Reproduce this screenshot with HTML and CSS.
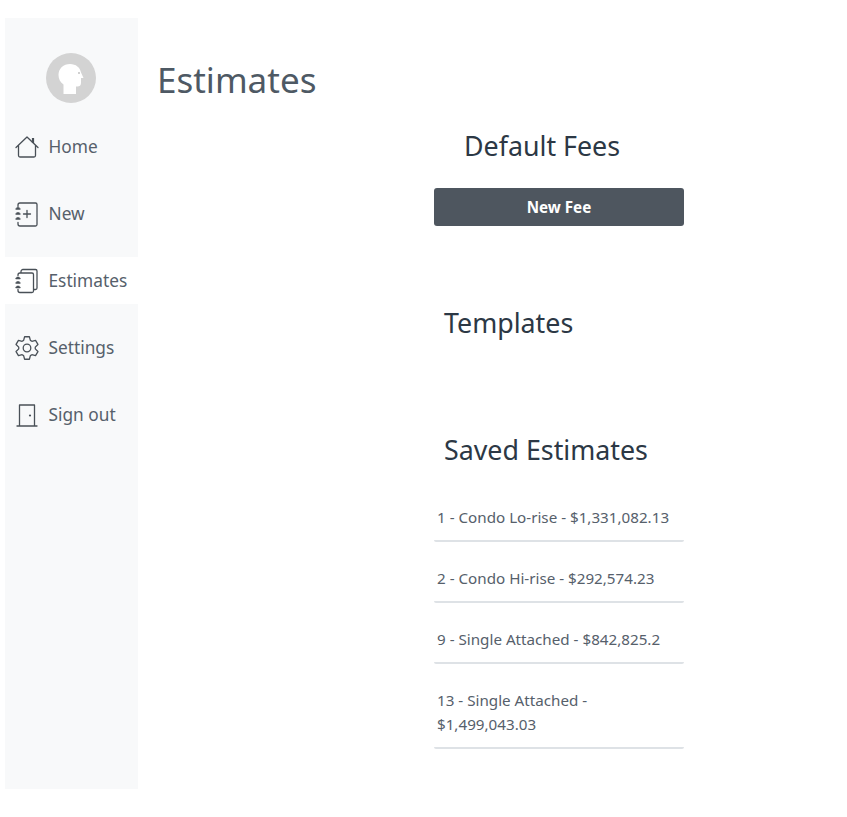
FILE: index.html
```html
<!DOCTYPE html>
<html lang="en">
<head>
<meta charset="utf-8">
<title>Estimates</title>
<link rel="stylesheet" href="styles.css">
</head>
<body>
<div class="app">
  <nav class="sidebar">
    <div class="avatar">
      <svg viewBox="0 0 50 50" width="50" height="50"><circle cx="25" cy="25" r="25" fill="#d3d3d3"/><path d="M17.500 41V31.500C14 29 12.500 25.500 12.500 22 12.500 15.500 17.500 11 24 11 30 11 34 14.500 35 19.500L37.500 25H35V30C35 32.500 33.500 33.500 31.500 33.500H30V41Z" fill="#fff"/><circle cx="33" cy="20" r=".9" fill="#bbb"/></svg>
    </div>
    <a class="item">
      <svg class="icon" viewBox="0 0 24 24"><path d="M1 12.500 12 2l11 10.500M3.500 10.500v10A1.500 1.500 0 0 0 5 22h14a1.500 1.500 0 0 0 1.500-1.500v-10"/><path class="chimney" d="M18 3v5"/></svg>
      <span>Home</span>
    </a>
    <a class="item">
      <svg class="icon" viewBox="0 0 24 24"><path d="M3 4.500V3a2 2 0 0 1 2-2h15.500A1.500 1.500 0 0 1 22 2.500v20a1.500 1.500 0 0 1-1.500 1.500H5a2 2 0 0 1-2-2v-1.500M1 7h4M2 5.800h2M1 12h4M2 10.800h2M1 17h4M2 15.800h2M12 8.500v7M8.500 12h7"/></svg>
      <span>New</span>
    </a>
    <a class="item active">
      <svg class="icon" viewBox="0 0 24 24"><path d="M3 6.500V6a2 2 0 0 1 2-2h12a1.500 1.500 0 0 1 1.500 1.500v16.500a1.500 1.500 0 0 1-1.500 1.500H5a2 2 0 0 1-2-2v-1M1 9.500h4M2 8.300h2M1 14h4M2 12.800h2M1 18.500h4M2 17.300h2M6 4V2.500a2 2 0 0 1 2-2h12.500A1.500 1.500 0 0 1 22 2v17a1.500 1.500 0 0 1-1.500 1.500h-2"/></svg>
      <span>Estimates</span>
    </a>
    <a class="item">
      <svg class="icon" viewBox="0 0 24 24"><path d="M8.620 4.420 9.610.75h4.780l.99 3.670 1.500.86 3.660-.97 2.400 4.140-2.680 2.680v1.740l2.680 2.680-2.400 4.140-3.660-.97-1.500.86-.99 3.670H9.610l-.99-3.670-1.500-.86-3.660.97-2.400-4.140 2.680-2.680v-1.740L1.060 8.450l2.400-4.140 3.660.97z"/><circle cx="12" cy="12" r="3.800"/></svg>
      <span>Settings</span>
    </a>
    <a class="item">
      <svg class="icon" viewBox="0 0 24 24"><path d="M2 23h20M4.500 23V2h15v21"/><circle class="knob" cx="15" cy="12.500" r="1.100"/></svg>
      <span>Sign out</span>
    </a>
  </nav>
  <main class="main">
    <h1 class="title">Estimates</h1>
    <div class="column">
      <h2 class="heading heading-fees">Default Fees</h2>
      <button class="button">New Fee</button>
      <h2 class="heading heading-templates">Templates</h2>
      <h2 class="heading heading-saved">Saved Estimates</h2>
      <ul class="list">
        <li>1 - Condo Lo-rise - $1,331,082.13</li>
        <li>2 - Condo Hi-rise - $292,574.23</li>
        <li>9 - Single Attached - $842,825.2</li>
        <li>13 - Single Attached - $1,499,043.03</li>
      </ul>
    </div>
  </main>
</div>
</body>
</html>
```
FILE: styles.css
```css
* { box-sizing: border-box; }
html, body { margin: 0; padding: 0; background: #fff; }
body { font-family: "Noto Sans", sans-serif; color: #495057; height: 817px; overflow: hidden; }
.app { display: flex; padding: 18px 0 0 5px; }
.sidebar { width: 133px; height: 771px; background: #f8f9fa; padding-top: 35px; flex: none; }
.avatar { display: flex; justify-content: center; height: 50px; margin-bottom: 20px; margin-left: -1px; }
.item { display: flex; align-items: center; gap: 9.500px; height: 47px; margin-bottom: 20px; padding-left: 10px; font-size: 17.300px; color: #56606b; }
.item.active { background: #fff; }
.icon { width: 24px; height: 24px; margin-top: 1px; overflow: visible; fill: none; stroke: #495057; stroke-width: 1.300; stroke-linecap: round; stroke-linejoin: round; flex: none; }
.chimney { stroke-width: 2.200; stroke-linecap: butt; }
.knob { fill: #495057; stroke: none; }
.main { flex: 1; padding-left: 19px; }
.title { margin: 39px 0 0; font-size: 35px; line-height: 45px; font-weight: 400; color: #4e5964; }
.column { width: 250px; margin-left: 277px; }
.heading { margin: 0; font-weight: 400; font-size: 26.800px; line-height: 36px; color: #2c3845; }
.heading-fees { padding-left: 30px; margin-top: 26px; }
.heading-templates { padding-left: 10px; margin-top: 79px; }
.heading-saved { padding-left: 10px; margin-top: 91px; }
.button { display: block; width: 250px; height: 38px; margin-top: 24px; background: #4e565f; color: #fff; border: 0; border-radius: 3px; font: 700 15.200px "Noto Sans", sans-serif; padding-bottom: 2px; }
.list { list-style: none; margin: 25px 0 0; padding: 0; }
.list li { padding: 12px 3px 11px; font-size: 15.200px; line-height: 24px; color: #56606b; border-bottom: 2px solid #dee2e6; border-radius: 2px; margin-bottom: 12px; }
```
